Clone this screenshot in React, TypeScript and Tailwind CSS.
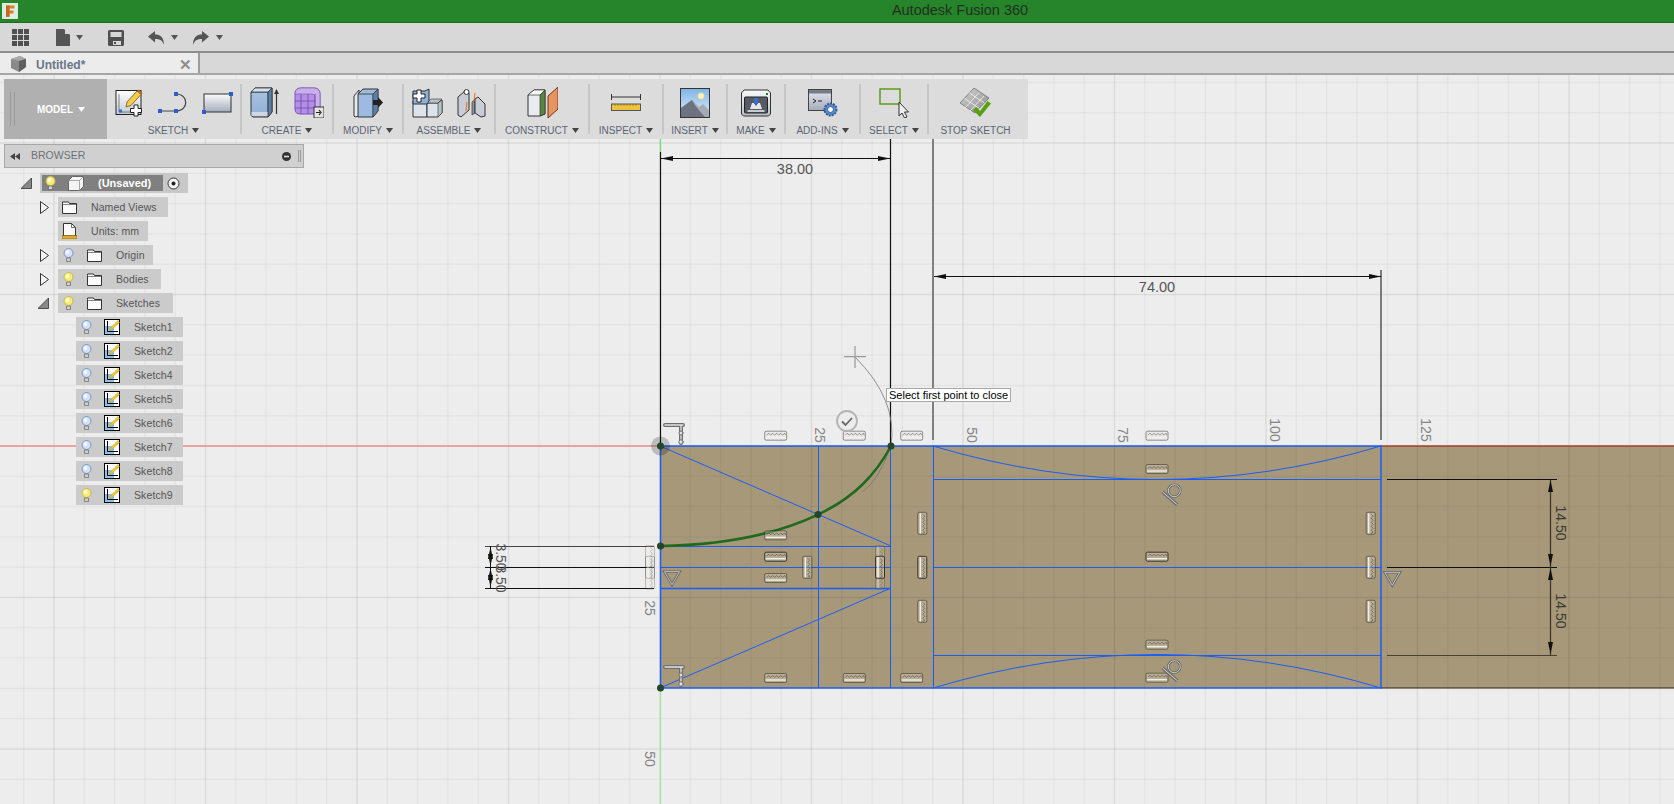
import React from 'react';

const Caret = ({ color = '#555' }: { color?: string }) => (
  <svg width="7" height="5" viewBox="0 0 7 5" className="shrink-0">
    <polygon points="0,0 7,0 3.5,5" fill={color} />
  </svg>
);

const FusionLogo = () => (
  <svg width="16" height="16" viewBox="0 0 16 16" className="ml-[2px]">
    <rect width="16" height="16" fill="#dbeee6" />
    <path d="M4 2.5h8.5v3H7.5v2h4v3h-4v3.5H4z" fill="#e07f2a" />
    <path d="M4 2.5h3.5v11H4z" fill="#c9681c" />
  </svg>
);

const GridIcon = () => (
  <svg width="17" height="17" viewBox="0 0 17 17" className="ml-3">
    {[0, 6, 12].map(x => [0, 6, 12].map(y => <rect key={`${x}-${y}`} x={x} y={y} width="5" height="5" fill="#505050" />))}
  </svg>
);

const FileIcon = () => (
  <svg width="14" height="17" viewBox="0 0 14 17" className="ml-[27px]">
    <path d="M0 0h8l6 6v11H0z" fill="#555" />
    <path d="M9 0l5 5H9z" fill="#d8d8d8" />
  </svg>
);

const SaveIcon = () => (
  <svg width="16" height="16" viewBox="0 0 16 16" className="ml-[25px]">
    <path d="M1 0h14l1 1v14l-1 1H1l-1-1V1z" fill="#505050" />
    <rect x="2.5" y="2" width="11" height="5" fill="#d8d8d8" />
    <rect x="5" y="11" width="8" height="4" fill="#d8d8d8" />
    <rect x="6" y="12" width="2" height="2" fill="#505050" />
  </svg>
);

const UndoIcon = ({ flip, className }: { flip?: boolean; className: string }) => (
  <svg width="16" height="14" viewBox="0 0 16 14" className={`${className} ${flip ? '-scale-x-100' : ''}`}>
    <path d="M7 0v3.5c5 0 9 2.5 9 10.5-1.5-4.5-4-6-9-6V11.5L0 5.5z" fill="#555" />
  </svg>
);

const TabCube = () => (
  <svg width="17" height="17" viewBox="0 0 17 17" className="ml-[10px]">
    <path d="M1 3l9-3 6 3v8l-7 5-8-4z" fill="#8a8a8a" />
    <path d="M1 3l8 2 7-2-6-3z" fill="#a8a8a8" />
    <path d="M9 5l7-2v8l-7 5z" fill="#5f5f5f" />
  </svg>
);

const SketchCreateIcon = () => (
  <svg width="29" height="28" viewBox="0 0 29 28">
    <defs>
      <linearGradient id="skc" x1="0" y1="0" x2="0" y2="1">
        <stop offset="0" stopColor="#fff" />
        <stop offset="1" stopColor="#c3cad6" />
      </linearGradient>
    </defs>
    <rect x="1" y="1.5" width="25" height="24" fill="url(#skc)" stroke="#222" />
    <path d="M4 5v18h17" fill="none" stroke="#555" strokeWidth="0.7" />
    <rect x="4" y="20.5" width="3" height="3" fill="#2e6fd0" />
    <path d="M12 13L22 2l4 3.5-10 11-5 1.5z" fill="#f3cd45" stroke="#6d5520" strokeWidth="0.8" />
    <path d="M22 2l2-1.5 3.5 3.5-1.5 1.5z" fill="#b8672d" />
    <path d="M19 16h4v3.5h3.5v4H23V27h-4v-3.5h-3.5v-4H19z" fill="#fff" stroke="#222" />
  </svg>
);

const ArcIcon = () => (
  <svg width="30" height="22" viewBox="0 0 30 22">
    <path d="M2 19h16c13 0 13-17 0-17" fill="none" stroke="#444" strokeWidth="1.2" />
    <rect x="0" y="17" width="4" height="4" fill="#2e5fc8" />
    <rect x="16" y="17" width="4" height="4" fill="#2e5fc8" />
    <rect x="16" y="0" width="4" height="4" fill="#2e5fc8" />
  </svg>
);

const RectIcon = () => (
  <svg width="31" height="22" viewBox="0 0 31 22">
    <defs>
      <linearGradient id="rct" x1="0" y1="0" x2="0" y2="1">
        <stop offset="0" stopColor="#fbfbfc" />
        <stop offset="1" stopColor="#a6adbc" />
      </linearGradient>
    </defs>
    <rect x="2" y="2" width="27" height="18" fill="url(#rct)" stroke="#333" />
    <rect x="27" y="0" width="4" height="4" fill="#2e5fc8" />
    <rect x="0" y="18" width="4" height="4" fill="#2e5fc8" />
  </svg>
);

const ExtrudeIcon = () => (
  <svg width="29" height="31" viewBox="0 0 29 31">
    <defs>
      <linearGradient id="ext" x1="0" y1="0" x2="0" y2="1">
        <stop offset="0" stopColor="#a9c4e2" />
        <stop offset="1" stopColor="#91b0d6" />
      </linearGradient>
    </defs>
    <path d="M1 5l4-4h17v24l-4 5H3l-2-1.5z" fill="url(#ext)" stroke="#333" />
    <path d="M1 5h17l4-4-4 4v25" fill="none" stroke="#333" strokeWidth="0.8" />
    <path d="M1 5l4-4h17l-4 4z" fill="#d5e3f0" stroke="#333" strokeWidth="0.8" />
    <path d="M18 5l4-4v24l-4 5z" fill="#5a7fa8" stroke="#333" strokeWidth="0.8" />
    <rect x="1.5" y="25" width="16" height="4" fill="#cfd6e0" />
    <path d="M26.5 27V6" stroke="#333" strokeWidth="1.2" />
    <polygon points="26.5,2 29,7 24,7" fill="#333" />
  </svg>
);

const MeshIcon = () => (
  <svg width="31" height="31" viewBox="0 0 31 31">
    <path d="M2 7Q2 1 8 1h13q6 0 6 6v15q0 5-5 5H7q-5 0-5-5z" fill="#b48fe6" stroke="#7c55b0" />
    <path d="M8 1h13q6 0 6 6v15l-5 5V10q0-3-3-3H2q0-6 6-6z" fill="#c8aeea" stroke="#7c55b0" strokeWidth="0.6" />
    <path d="M8 7v20M15 7v20M2 14h20M2 21h20M22 7v20" stroke="#6e48a6" strokeWidth="0.8" />
    <rect x="21" y="20" width="10" height="11" fill="#e4e4e4" stroke="#333" />
    <path d="M23 25.500h4M26 23l2 2.500-2 2.500" fill="none" stroke="#222" strokeWidth="1.2" />
  </svg>
);

const ModifyIcon = () => (
  <svg width="30" height="30" viewBox="0 0 30 30">
    <path d="M1 8l5-6v26l-4 1-1-1z" fill="#e8ecf0" stroke="#333" />
    <path d="M5 6l5-5h15v22l-5 6H5z" fill="#9dbbe0" stroke="#333" />
    <path d="M5 6h15l5-5M20 6v23" fill="none" stroke="#333" strokeWidth="0.8" />
    <path d="M20 6l5-5v22l-5 6z" fill="#5d7ea6" stroke="#333" strokeWidth="0.6" />
    <path d="M20 12h5V9l5 5.500-5 5.500v-3h-5z" fill="#222" />
  </svg>
);

const AssembleIcon = () => (
  <svg width="31" height="30" viewBox="0 0 31 30">
    <path d="M1 13h14v16H1z" fill="#dde3ea" stroke="#333" />
    <path d="M15 15h11l4-3v13l-4 4H15z" fill="#dde3ea" stroke="#333" />
    <path d="M15 15l4-4h11l-4 4zM26 15l4-3v13l-4 4z" fill="#b8c0ca" stroke="#333" strokeWidth="0.6" />
    <path d="M1 3h12l4-2v12l-2 3H1z" fill="#8fb0db" stroke="#333" />
    <path d="M5 2h4v4h4v4H9v4H5v-4H1V6h4z" fill="#fff" stroke="#222" />
  </svg>
);

const JointIcon = () => (
  <svg width="29" height="30" viewBox="0 0 29 30">
    <path d="M1 9l7-6 4 2v17l-8 7-3-2z" fill="#c8ccd4" stroke="#333" />
    <circle cx="9.500" cy="4" r="2.500" fill="#fff" stroke="#333" />
    <path d="M15 14l3-3v14l-3 2z" fill="#8d939e" stroke="#333" strokeWidth="0.7" />
    <path d="M18 11l3-2 7 7v12l-4 1-6-4z" fill="#c9ced6" stroke="#333" />
    <path d="M18 5l-1 8M10 14l-1 9" stroke="#e8751a" strokeWidth="1.1" />
  </svg>
);

const ConstructIcon = () => (
  <svg width="31" height="31" viewBox="0 0 31 31">
    <path d="M1 8l6-5h11v24l-5 2H1z" fill="#e8ecf0" stroke="#333" />
    <path d="M1 8h12l5-5H7z" fill="#fbfbfb" stroke="#333" strokeWidth="0.7" />
    <path d="M13 8l5-5v24l-5 2z" fill="#55883f" stroke="#333" strokeWidth="0.7" />
    <path d="M21 9l10-9v22l-10 9z" fill="#e59561" stroke="#7a2e10" />
  </svg>
);

const InspectIcon = () => (
  <svg width="30" height="17" viewBox="0 0 30 17">
    <path d="M0.500 0v6M29.500 0v6M1 3h28" stroke="#333" strokeWidth="1" />
    <rect x="0.500" y="10" width="29" height="6.500" fill="#eec342" stroke="#555" />
    <path d="M4 10v2M7 10v2M10 10v2M13 10v2M16 10v2M19 10v2M22 10v2M25 10v2" stroke="#8a6a10" strokeWidth="0.7" />
  </svg>
);

const InsertIcon = () => (
  <svg width="30" height="30" viewBox="0 0 30 30">
    <defs>
      <linearGradient id="ins" x1="0" y1="0" x2="0" y2="1">
        <stop offset="0" stopColor="#7fb4e6" />
        <stop offset="1" stopColor="#e4eef6" />
      </linearGradient>
    </defs>
    <rect x="0.500" y="0.500" width="29" height="29" fill="url(#ins)" stroke="#333" />
    <circle cx="21" cy="8" r="3" fill="#fdf3b8" stroke="#f6e39a" />
    <path d="M1 29V20l11-8 7 7 4-3 6 6v7z" fill="#a6abb3" />
    <path d="M1 29V20l11-8c3 6 7 10 13 17z" fill="#6c7280" />
  </svg>
);

const MakeIcon = () => (
  <svg width="30" height="28" viewBox="0 0 30 28">
    <defs>
      <linearGradient id="mk" x1="0" y1="0" x2="0" y2="1">
        <stop offset="0" stopColor="#fafafa" />
        <stop offset="1" stopColor="#b8bcc4" />
      </linearGradient>
    </defs>
    <path d="M3 1h24l2.500 3v21l-2 2h-25l-2-2V4z" fill="url(#mk)" stroke="#333" />
    <rect x="3.500" y="8" width="23" height="16" rx="1" fill="#555a64" stroke="#222" />
    <path d="M9 20l2-6h8l2 6z" fill="#e6e8ec" />
    <rect x="13" y="9" width="4" height="6" fill="#2f74c6" />
    <path d="M14 15h2l-1 2z" fill="#222" />
    <rect x="6.500" y="21" width="17" height="2" fill="#c8ccd2" />
    <rect x="25" y="4" width="2" height="2" fill="#118a20" />
  </svg>
);

const AddInsIcon = () => (
  <svg width="30" height="28" viewBox="0 0 30 28">
    <defs>
      <linearGradient id="add" x1="0" y1="0" x2="0" y2="1">
        <stop offset="0" stopColor="#e6e8ee" />
        <stop offset="1" stopColor="#a5abbb" />
      </linearGradient>
    </defs>
    <rect x="0.500" y="0.500" width="23" height="21" fill="url(#add)" stroke="#444" />
    <rect x="1" y="1" width="22" height="3.500" fill="#777c88" />
    <path d="M5 10l3 2-3 2M10 12h4" fill="none" stroke="#222" />
    <circle cx="22.500" cy="20.500" r="6" fill="#5b8ed0" stroke="#2f5a98" strokeWidth="2" strokeDasharray="2 1" />
    <circle cx="22.500" cy="20.500" r="3" fill="#fff" stroke="#2f5a98" />
  </svg>
);

const SelectIcon = () => (
  <svg width="30" height="30" viewBox="0 0 30 30">
    <rect x="1" y="1" width="20" height="15" fill="none" stroke="#5c9a1f" strokeWidth="1.500" />
    <path d="M20 14v14l3-3 2.500 5 2.500-1-2.500-5h4z" fill="#eee" stroke="#333" />
  </svg>
);

const StopSketchIcon = () => (
  <svg width="31" height="30" viewBox="0 0 31 30">
    <defs>
      <linearGradient id="stp" x1="0" y1="0" x2="1" y2="1">
        <stop offset="0" stopColor="#d4d4d4" />
        <stop offset="1" stopColor="#8c8c8c" />
      </linearGradient>
    </defs>
    <path d="M0 15L14 0l15 10-14 15z" fill="url(#stp)" stroke="#666" strokeWidth="0.7" />
    <path d="M4.500 10.500l15 10M9.500 5l15 10M5 20L19 4.500M10 23L24 8" stroke="#eee" strokeWidth="0.9" />
    <path d="M13 22l3.500-3 3.500 4 7.500-10 3.500 2.500L20 29z" fill="#58a010" />
  </svg>
);

const Bulb = ({ on }: { on?: boolean }) => (
  <svg width="11" height="15" viewBox="0 0 11 15">
    <circle cx="5.500" cy="5" r="4.500" fill={on ? '#f8ec78' : '#d4e0fa'} stroke={on ? '#c8b84a' : '#7d94c4'} />
    <circle cx="4.500" cy="4" r="2" fill="#fff" opacity="0.7" />
    <path d="M3.500 10h4v3.500h-4z" fill="#d0d0d0" stroke="#666" strokeWidth="0.7" />
  </svg>
);

const Folder = () => (
  <svg width="15" height="13" viewBox="0 0 15 13">
    <path d="M0.500 2.500V1h6l1 1.500h7v10h-14z" fill="#fbfbfd" stroke="#333" />
    <path d="M0.500 3.500h14" stroke="#333" strokeWidth="0.6" />
  </svg>
);

const UnitsIcon = () => (
  <svg width="15" height="16" viewBox="0 0 15 16">
    <path d="M1.500 0.500h8l4 4V13h-12z" fill="#fbfbfb" stroke="#333" />
    <path d="M9.500 0.500v4h4" fill="none" stroke="#333" strokeWidth="0.7" />
    <rect x="0" y="12.500" width="15" height="3.500" fill="#e0ab2a" stroke="#7a5c10" strokeWidth="0.6" />
  </svg>
);

const SketchBadge = () => (
  <svg width="16" height="16" viewBox="0 0 16 16">
    <rect x="0.500" y="0.500" width="15" height="15" fill="#fff" stroke="#000" />
    <rect x="1" y="7" width="9" height="8" fill="#8fc0e6" />
    <path d="M3.500 2v10.500H14" fill="none" stroke="#000" strokeWidth="1" />
    <path d="M5.500 10L14 1.500l1.500 2L7 11z" fill="#f4d020" stroke="#a87c10" strokeWidth="0.4" />
  </svg>
);

const TreeRow = ({ slot, width, caret, bulb, icon, label }: {
  slot: string;
  width: string;
  caret?: 'open' | 'closed';
  bulb?: 'on' | 'off';
  icon: React.ReactNode;
  label: string;
}) => (
  <div className="flex h-5 items-center">
    <div className={`flex items-center justify-end pr-[9px] ${slot}`}>
      {caret === 'closed' && (
        <svg width="9" height="13" viewBox="0 0 9 13"><path d="M0.500 0.500l8 6-8 6z" fill="#f4f4f4" stroke="#333" /></svg>
      )}
      {caret === 'open' && (
        <svg width="11" height="11" viewBox="0 0 11 11"><path d="M0 10.500L10.500 0v10.500z" fill="#888" stroke="#333" strokeWidth="0.8" /></svg>
      )}
    </div>
    <div className={`flex h-5 items-center bg-[#cbcbcb] ${width}`}>
      {bulb ? (
        <div className="flex w-7 justify-center pr-2"><Bulb on={bulb === 'on'} /></div>
      ) : (
        <div className="w-[3px]" />
      )}
      <div className="flex w-[16px] justify-center">{icon}</div>
      <span className="ml-[14px] whitespace-nowrap pt-[2px] text-[10.5px] tracking-[0.1px] text-[#555]">{label}</span>
    </div>
  </div>
);

const ToolGroup = ({ width, label, caret = true, children }: {
  width: string;
  label: string;
  caret?: boolean;
  children: React.ReactNode;
}) => (
  <>
    <div className={`flex shrink-0 flex-col items-center pt-2 ${width}`}>
      <div className="flex h-[31px] items-center gap-[14px]">{children}</div>
      <div className="mt-[5px] flex h-[14px] items-center gap-[4px] text-[10px] text-[#5b6472]">
        <span className="whitespace-nowrap">{label}</span>
        {caret && <Caret color="#444" />}
      </div>
    </div>
    {caret && <div className="my-[5px] w-[2px] shrink-0 bg-[#c6c6c6]" />}
  </>
);

const GRID = Array.from({ length: 70 }, (_, i) => i - 22);

const Comb = ({ x, y, v, dark, ghost }: { x: number; y: number; v?: boolean; dark?: boolean; ghost?: boolean }) => (
  <g transform={`translate(${x} ${y}) rotate(${v ? 90 : 0})`} opacity={ghost ? 0.55 : 1}>
    <rect x="-11" y="-4.500" width="22" height="9" rx="1.500" fill="#e4e0d8" fillOpacity="0.3" stroke={dark ? '#2f2a20' : '#000'} strokeOpacity={dark ? 0.9 : 0.4} />
    <path d="M-9 -0.500l2-2 2 2 2-2 2 2 2-2 2 2 2-2 2 2 2-2 1 2" fill="none" stroke="#000" strokeOpacity="0.45" strokeWidth="0.8" />
    <path d="M-10 2h20" stroke="#f4f2ee" strokeWidth="1.300" />
  </g>
);

// bar with a short overhang past the stem, stem closed by a small knob
const FixMark = ({ x, y }: { x: number; y: number }) => (
  <g transform={`translate(${x} ${y})`} fill="none" strokeLinecap="round">
    <path d="M0 2h18M16 2v18" stroke="#6e6e6e" strokeWidth="4" />
    <path d="M0 2h18M16 2v18" stroke="#e2e2e2" strokeWidth="1.300" />
    <circle cx="16" cy="10" r="2" fill="#e2e2e2" stroke="#6e6e6e" />
    <circle cx="16" cy="19" r="2.200" fill="#e2e2e2" stroke="#6e6e6e" />
  </g>
);

const TangentMark = ({ x, y }: { x: number; y: number }) => (
  <g transform={`translate(${x} ${y})`} fill="none">
    <circle cx="0" cy="0" r="6" stroke="#6a6a6a" strokeWidth="2.600" />
    <circle cx="0" cy="0" r="6" stroke="#ddd" strokeWidth="0.800" />
    <path d="M-12 1L3 14" stroke="#6a6a6a" strokeWidth="3.200" />
    <path d="M-12 1L3 14" stroke="#ddd" strokeWidth="1" />
  </g>
);

const TriMark = ({ x, y }: { x: number; y: number }) => (
  <g transform={`translate(${x} ${y})`} fill="none">
    <path d="M-7.500 -6h15L0 7z" stroke="#666" strokeWidth="2.600" />
    <path d="M-7.500 -6h15L0 7z" stroke="#ddd" strokeWidth="0.800" />
  </g>
);

const Arrow = ({ x, y, dir }: { x: number; y: number; dir: 'l' | 'r' | 'u' | 'd' }) => {
  const pts = {
    l: `${x},${y} ${x + 12},${y - 2.5} ${x + 12},${y + 2.5}`,
    r: `${x},${y} ${x - 12},${y - 2.5} ${x - 12},${y + 2.5}`,
    u: `${x},${y} ${x - 2.5},${y + 12} ${x + 2.5},${y + 12}`,
    d: `${x},${y} ${x - 2.5},${y - 12} ${x + 2.5},${y - 12}`,
  }[dir];
  return <polygon points={pts} fill="#111" />;
};

const Rotated = ({ x, y, size, fill, children }: { x: number; y: number; size: number; fill: string; children: string }) => (
  <text
    x={x}
    y={y}
    fontSize={size}
    fill={fill}
    textAnchor="middle"
    dominantBaseline="central"
    transform={`rotate(90 ${x} ${y})`}
  >
    {children}
  </text>
);

const SketchCanvas = () => (
  <svg width="1674" height="729" viewBox="0 75 1674 729" className="absolute inset-0 block">
    <rect x="660" y="446" width="1014" height="242" fill="#a69879" />
    {GRID.map(k => {
      const x = 660 + k * 30.3;
      const major = k % 5 === 0;
      return <line key={`v${k}`} x1={x} x2={x} y1="75" y2="804" stroke="#000" strokeOpacity={major ? 0.075 : 0.035} strokeWidth="1.500" />;
    })}
    {GRID.map(k => {
      const y = 446 + k * 30.3;
      const major = k % 5 === 0;
      return <line key={`h${k}`} x1="0" x2="1674" y1={y} y2={y} stroke="#000" strokeOpacity={major ? 0.075 : 0.035} strokeWidth="1.500" />;
    })}

    <line x1="0" x2="660" y1="446" y2="446" stroke="#ec8f8f" strokeWidth="1.500" />
    <line x1="1381" x2="1674" y1="446" y2="446" stroke="#a5402c" strokeWidth="1.500" />
    <line x1="1381" x2="1674" y1="688" y2="688" stroke="#2e2618" strokeWidth="1.200" />
    <line x1="660.500" x2="660.500" y1="139" y2="152" stroke="#6fe06f" strokeWidth="1.200" />
    <line x1="660.500" x2="660.500" y1="688" y2="804" stroke="#9be89b" strokeWidth="1.200" />

    {/* dimensions */}
    <line x1="660.500" x2="660.500" y1="152" y2="446" stroke="#111" strokeWidth="1.200" />
    <line x1="890.500" x2="890.500" y1="139" y2="446" stroke="#111" strokeWidth="1.200" />
    <line x1="933" x2="933" y1="139" y2="440" stroke="#7f7f7f" strokeWidth="2" />
    <line x1="1381" x2="1381" y1="270" y2="440" stroke="#555" strokeWidth="1.500" />
    <line x1="661" x2="890" y1="158.500" y2="158.500" stroke="#111" />
    <Arrow x={661} y={158.5} dir="l" />
    <Arrow x={890} y={158.5} dir="r" />
    <text x="795" y="169" fontSize="14.500" fill="#555" textAnchor="middle" dominantBaseline="central">38.00</text>
    <line x1="934" x2="1381" y1="276.500" y2="276.500" stroke="#111" />
    <Arrow x={934} y={276.5} dir="l" />
    <Arrow x={1381} y={276.5} dir="r" />
    <text x="1157" y="287" fontSize="14.500" fill="#555" textAnchor="middle" dominantBaseline="central">74.00</text>

    <g stroke="#111">
      <line x1="485" x2="654" y1="546.500" y2="546.500" stroke="#444" />
      <line x1="485" x2="654" y1="567.500" y2="567.500" />
      <line x1="485" x2="654" y1="588.500" y2="588.500" />
      <line x1="1387" x2="1557" y1="479.500" y2="479.500" />
      <line x1="1387" x2="1557" y1="567.500" y2="567.500" />
      <line x1="1387" x2="1557" y1="655.500" y2="655.500" stroke="#4a4030" />
      <line x1="490.500" x2="490.500" y1="546" y2="588" />
      <line x1="1550.500" x2="1550.500" y1="480" y2="655" stroke="#3c372c" strokeWidth="1.300" />
    </g>
    <Arrow x={490.5} y={547} dir="u" />
    <Arrow x={490.5} y={566} dir="d" />
    <Arrow x={490.5} y={568} dir="u" />
    <Arrow x={490.5} y={587} dir="d" />
    <Arrow x={1550.5} y={480} dir="u" />
    <Arrow x={1550.5} y={566} dir="d" />
    <Arrow x={1550.5} y={568} dir="u" />
    <Arrow x={1550.5} y={654} dir="d" />
    <Rotated x={501} y={557} size={14} fill="#555">3.50</Rotated>
    <Rotated x={501} y={579} size={14} fill="#555">3.50</Rotated>
    <Rotated x={1561} y={523} size={14} fill="#3d3a32">14.50</Rotated>
    <Rotated x={1561} y={611} size={14} fill="#3d3a32">14.50</Rotated>

    {/* ruler numbers */}
    <Rotated x={820} y={435} size={14} fill="#858585">25</Rotated>
    <Rotated x={972} y={435} size={14} fill="#858585">50</Rotated>
    <Rotated x={1123} y={435} size={14} fill="#858585">75</Rotated>
    <Rotated x={1275} y={430} size={14} fill="#858585">100</Rotated>
    <Rotated x={1426} y={430} size={14} fill="#858585">125</Rotated>
    <Rotated x={650} y={608} size={14} fill="#858585">25</Rotated>
    <Rotated x={650} y={759} size={14} fill="#858585">50</Rotated>

    {/* sketch geometry */}
    <g fill="none" stroke="#1b5ef5">
      <path d="M660.500 446H1381V688H660.500Z" strokeWidth="1.500" />
      <line x1="890.500" x2="890.500" y1="446" y2="688" />
      <line x1="933.500" x2="933.500" y1="446" y2="688" />
      <line x1="818.500" x2="818.500" y1="446" y2="688" />
      <line x1="660" x2="891" y1="546.500" y2="546.500" />
      <line x1="660" x2="891" y1="567.500" y2="567.500" />
      <line x1="660" x2="891" y1="588.500" y2="588.500" strokeWidth="1.300" />
      <line x1="660" x2="891" y1="446" y2="546" />
      <line x1="660" x2="891" y1="688" y2="588" />
      <line x1="933" x2="1381" y1="479.500" y2="479.500" />
      <line x1="933" x2="1381" y1="567.500" y2="567.500" />
      <line x1="933" x2="1381" y1="655.500" y2="655.500" />
      <path d="M933 446Q1157 513 1381 446" />
      <path d="M933 688Q1157 621 1381 688" />
    </g>
    <path d="M855 357Q898 400 891 446Q878 482 862 492" fill="none" stroke="#777" strokeWidth="0.800" />
    <path d="M660 546C725 545 775 535 818 514.600C855 497 876 474 891 446" fill="none" stroke="#1f6a1f" strokeWidth="2.600" />

    {/* constraint glyphs */}
    {[
      [775.7, 435.7], [854.3, 435.7], [911.7, 435.7], [775.7, 535.3], [775.7, 578], [775.7, 678], [854.3, 678], [911.7, 678],
      [1157, 435.7], [1157, 469], [1157, 644.7], [1157, 677.7],
    ].map(([x, y]) => <Comb key={`c${x}-${y}`} x={x} y={y} />)}
    <Comb x={775.7} y={556.7} dark />
    <Comb x={1157} y={556.7} dark />
    {[
      [807.3, 567.3], [922.3, 523.3], [922.3, 611.3], [1370.7, 523.3], [1370.7, 567.3], [1370.7, 611.3],
    ].map(([x, y]) => <Comb key={`w${x}-${y}`} x={x} y={y} v />)}
    <Comb x={880} y={556.7} v ghost />
    <Comb x={880} y={578} v ghost />
    <Comb x={880} y={567.3} v dark />
    <Comb x={922.3} y={567.3} v dark />
    <Comb x={650} y={556.7} v ghost />
    <Comb x={650} y={578} v ghost />
    <Comb x={650} y={567.3} v ghost />
    <FixMark x={665} y={423} />
    <FixMark x={665} y={665} />
    <TangentMark x={1174.3} y={490.7} />
    <TangentMark x={1174.3} y={666.7} />
    <TriMark x={672} y={577.7} />
    <TriMark x={1392.3} y={578.3} />

    <circle cx="847" cy="421" r="10" fill="#ececec" stroke="#b4b4b4" strokeWidth="1.800" />
    <path d="M842 421.500l3.500 3.500 6.500-7" fill="none" stroke="#666" strokeWidth="1.800" />

    <circle cx="660.500" cy="446" r="9.500" fill="#000" fillOpacity="0.2" />
    {[[660.5, 446], [660.5, 688], [891, 446], [818, 514.6], [660.5, 546]].map(([x, y]) => (
      <circle key={`p${x}-${y}`} cx={x} cy={y} r="3.500" fill="#24452c" />
    ))}
    <path d="M844 356.700h22M855 346v22" stroke="#9a9a9a" strokeWidth="1.200" />
  </svg>
);

const SKETCHES = ['Sketch1', 'Sketch2', 'Sketch4', 'Sketch5', 'Sketch6', 'Sketch7', 'Sketch8', 'Sketch9'];

const App: React.FC = () => {
  return (
    <div className="flex h-screen w-full flex-col overflow-hidden bg-[#ededed] [font-family:'Liberation_Sans',Arial,sans-serif]">
      <div className="relative flex h-[23px] shrink-0 items-center justify-center border-b border-[#1c6b20] bg-[#26842a] pl-[246px] text-[14.5px] text-[#20321f]">
        <div className="absolute left-0 top-[3px]"><FusionLogo /></div>
        Autodesk Fusion 360
      </div>

      <div className="flex h-[30px] shrink-0 items-center border-b-2 border-[#8e8e8e] bg-[#d8d8d8] pt-[1px]">
        <GridIcon />
        <FileIcon />
        <div className="ml-[6px]"><Caret /></div>
        <SaveIcon />
        <UndoIcon className="ml-6" />
        <div className="ml-[7px]"><Caret /></div>
        <UndoIcon flip className="ml-[15px]" />
        <div className="ml-[7px]"><Caret /></div>
      </div>

      <div className="flex h-[22px] shrink-0 items-stretch border-b-2 border-[#a6a6a6] bg-[#d8d8d8]">
        <div className="flex w-[198px] items-center bg-[#ececec] pt-[2px]">
          <TabCube />
          <span className="ml-[9px] pt-[1px] text-[12px] font-bold text-[#6a7688]">Untitled*</span>
          <span className="ml-auto mr-[6px] text-[15px] font-bold leading-none text-[#8d8d8d]">✕</span>
        </div>
        <div className="w-[2px] bg-[#9c9c9c]" />
      </div>

      <div className="relative flex-1">
        <SketchCanvas />

        <div className="absolute left-1 top-[4px] flex h-[60px] w-[1024px] bg-[#dcdcdc]">
          <div className="flex w-[103px] shrink-0 items-center bg-[#b0b0b0] pl-[6px]">
            <div className="h-[34px] w-[5px] border-x border-[#999]" />
            <span className="ml-[22px] text-[10px] font-bold text-white">MODEL</span>
            <div className="ml-[5px]"><Caret color="#fff" /></div>
          </div>
          <ToolGroup width="w-[133px]" label="SKETCH">
            <SketchCreateIcon />
            <ArcIcon />
            <RectIcon />
          </ToolGroup>
          <ToolGroup width="w-[90px]" label="CREATE">
            <ExtrudeIcon />
            <MeshIcon />
          </ToolGroup>
          <ToolGroup width="w-[68px]" label="MODIFY"><ModifyIcon /></ToolGroup>
          <ToolGroup width="w-[90px]" label="ASSEMBLE">
            <AssembleIcon />
            <JointIcon />
          </ToolGroup>
          <ToolGroup width="w-[92px]" label="CONSTRUCT"><ConstructIcon /></ToolGroup>
          <ToolGroup width="w-[72px]" label="INSPECT"><InspectIcon /></ToolGroup>
          <ToolGroup width="w-[62px]" label="INSERT"><InsertIcon /></ToolGroup>
          <ToolGroup width="w-[56px]" label="MAKE"><MakeIcon /></ToolGroup>
          <ToolGroup width="w-[73px]" label="ADD-INS"><AddInsIcon /></ToolGroup>
          <ToolGroup width="w-[66px]" label="SELECT"><SelectIcon /></ToolGroup>
          <ToolGroup width="w-[99px] pr-[6px]" label="STOP SKETCH" caret={false}><StopSketchIcon /></ToolGroup>
        </div>

        <div className="absolute left-0 top-[69px] flex flex-col">
          <div className="ml-1 flex h-6 w-[300px] items-center border border-[#a8a8a8] bg-[#d0d0d0]">
            <svg width="10" height="7" viewBox="0 0 10 7" className="ml-[5px]">
              <path d="M5 0v7L0 3.500zM10 0v7L5 3.500z" fill="#444" />
            </svg>
            <span className="ml-[11px] text-[10.5px] text-[#6d7278]">BROWSER</span>
            <svg width="9" height="9" viewBox="0 0 9 9" className="ml-auto">
              <circle cx="4.500" cy="4.500" r="4.500" fill="#333" />
              <rect x="2" y="3.700" width="5" height="1.600" fill="#ddd" />
            </svg>
            <div className="ml-[7px] mr-[2px] h-[12px] w-[3px] border-x border-[#999]" />
          </div>

          <div className="mt-[5px] flex flex-col gap-1">
            <div className="flex h-5 items-center">
              <div className="flex w-10 justify-end pr-2">
                <svg width="11" height="11" viewBox="0 0 11 11"><path d="M0 10.500L10.500 0v10.500z" fill="#888" stroke="#333" strokeWidth="0.8" /></svg>
              </div>
              <div className="flex h-5 w-[148px] items-center bg-[#c8c8c8] pl-[2px]">
                <div className="flex h-4 w-[121px] items-center bg-[#808080] pl-[1px]">
                  <div className="flex w-[14px] justify-center"><Bulb on /></div>
                  <svg width="16" height="15" viewBox="0 0 16 15" className="ml-[11px]">
                    <path d="M0.500 4.500l4-4h11v10l-4 4h-11z" fill="#f4f4f4" stroke="#666" />
                    <path d="M0.500 4.500h11l4-4M11.500 4.500v10" fill="none" stroke="#888" strokeWidth="0.7" />
                  </svg>
                  <span className="ml-[14px] text-[11px] font-bold text-white">(Unsaved)</span>
                </div>
                <svg width="13" height="13" viewBox="0 0 13 13" className="ml-[4px]">
                  <circle cx="6.500" cy="6.500" r="5.500" fill="#f4f4f4" stroke="#333" />
                  <circle cx="6.500" cy="6.500" r="2" fill="#222" />
                </svg>
              </div>
            </div>
            <TreeRow slot="w-[58px]" width="w-[110px]" caret="closed" icon={<Folder />} label="Named Views" />
            <TreeRow slot="w-[58px]" width="w-[90px]" icon={<UnitsIcon />} label="Units: mm" />
            <TreeRow slot="w-[58px]" width="w-[95px]" caret="closed" bulb="off" icon={<Folder />} label="Origin" />
            <TreeRow slot="w-[58px]" width="w-[103px]" caret="closed" bulb="on" icon={<Folder />} label="Bodies" />
            <TreeRow slot="w-[58px]" width="w-[115px]" caret="open" bulb="on" icon={<Folder />} label="Sketches" />
            {SKETCHES.map(name => (
              <TreeRow
                key={name}
                slot="w-[76px]"
                width="w-[107px]"
                bulb={name === 'Sketch9' ? 'on' : 'off'}
                icon={<SketchBadge />}
                label={name}
              />
            ))}
          </div>
        </div>

        <div className="absolute left-[886px] top-[313px] flex h-[14px] items-center border border-[#a8a8a8] bg-white px-[2px] text-[11px] leading-none text-black">
          Select first point to close
        </div>
      </div>
    </div>
  );
};

export default App;
